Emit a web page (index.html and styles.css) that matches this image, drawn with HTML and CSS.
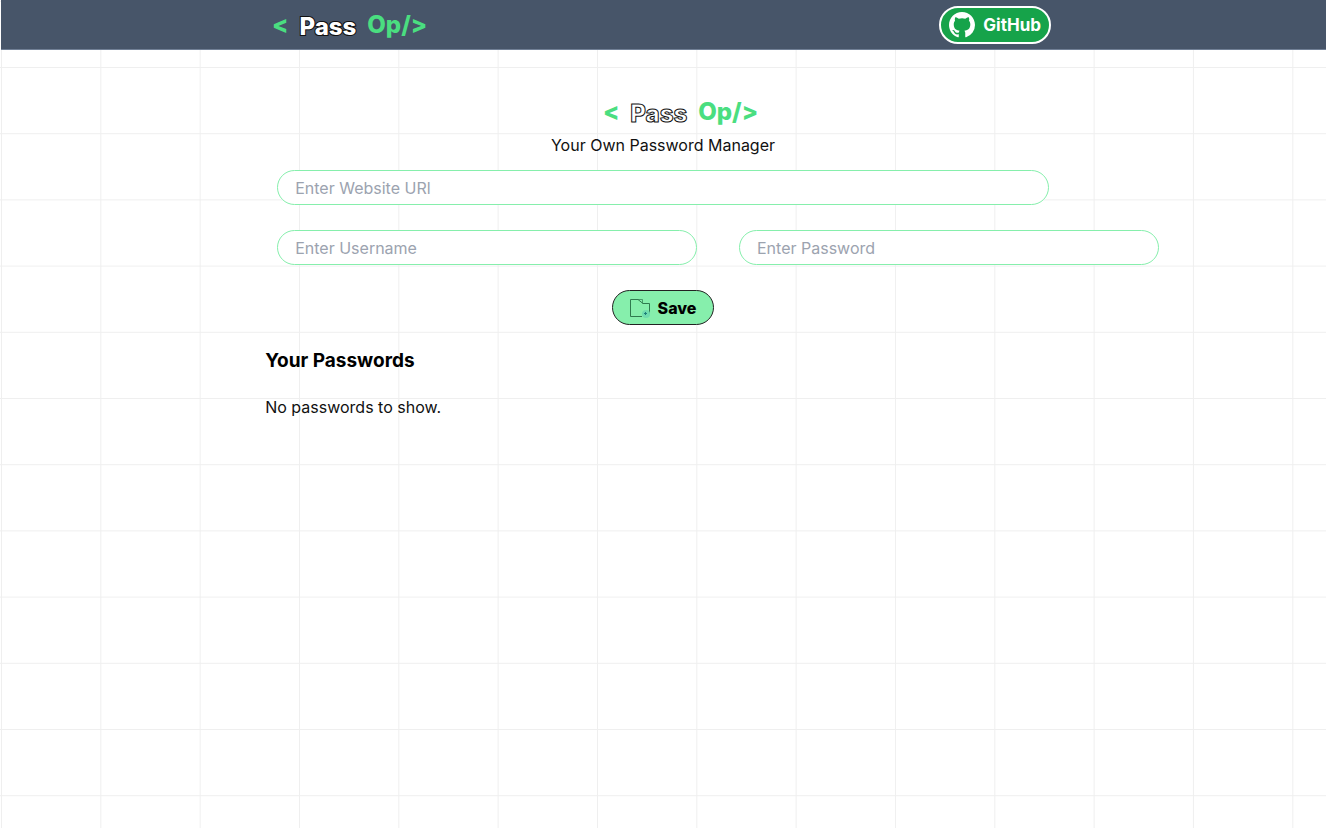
FILE: index.html
```html
<!DOCTYPE html>
<html lang="en">
<head>
<meta charset="utf-8">
<meta name="viewport" content="width=device-width, initial-scale=1">
<title>PassOp</title>
<link rel="stylesheet" href="styles.css">
</head>
<body>
<svg class="backdrop" aria-hidden="true">
  <defs>
    <pattern id="cells" x="1" y="67" width="99.33" height="66.2" patternUnits="userSpaceOnUse">
      <path d="M0 .5H99.33M.5 0V66.2" stroke="#efefef" fill="none"/>
    </pattern>
  </defs>
  <rect width="100%" height="100%" fill="url(#cells)"/>
</svg>
<header class="navbar">
  <div class="navbar-inner">
    <div class="logo"><span class="green">&lt;</span><span class="pass pass-solid">Pass</span><span class="green">Op/&gt;</span></div>
    <button class="github" type="button">
      <svg class="github-icon" viewBox="0 0 16 16" aria-hidden="true"><path fill="#fff" d="M8 0C3.58 0 0 3.58 0 8c0 3.54 2.29 6.53 5.47 7.59.4.07.55-.17.55-.38 0-.19-.01-.82-.01-1.49-2.01.37-2.53-.49-2.69-.94-.09-.23-.48-.94-.82-1.13-.28-.15-.68-.52-.01-.53.63-.01 1.08.58 1.23.82.72 1.21 1.87.87 2.33.66.07-.52.28-.87.51-1.07-1.78-.2-3.64-.89-3.64-3.95 0-.87.31-1.59.82-2.15-.08-.2-.36-1.02.08-2.12 0 0 .67-.21 2.2.82a7.4 7.4 0 0 1 4 0c1.53-1.04 2.2-.82 2.2-.82.44 1.1.16 1.92.08 2.12.51.56.82 1.27.82 2.15 0 3.07-1.87 3.75-3.65 3.95.29.25.54.73.54 1.48 0 1.07-.01 1.93-.01 2.2 0 .21.15.46.55.38A8.01 8.01 0 0 0 16 8c0-4.42-3.58-8-8-8z"/></svg>
      <span>GitHub</span>
    </button>
  </div>
</header>
<main class="content">
  <h1 class="logo logo-center"><span class="green">&lt;</span><span class="pass">Pass</span><span class="green">Op/&gt;</span></h1>
  <p class="tagline">Your Own Password Manager</p>
  <form class="form">
    <input class="field" type="text" aria-label="Website URL" placeholder="Enter Website URl">
    <div class="credentials">
      <input class="field" type="text" aria-label="Username" placeholder="Enter Username">
      <input class="field" type="password" aria-label="Password" placeholder="Enter Password">
    </div>
    <button class="save" type="button">
      <svg class="save-icon" viewBox="0 0 22 22" aria-hidden="true">
        <path d="M13 19.500H1.500V2.500H9L14 6.500H20.500V17" fill="none" stroke="#2f7a4e"/>
        <path d="M9 2.500L13.500 2.500V6.500" fill="none" stroke="#2f7a4e" stroke-width=".7"/>
        <circle cx="17" cy="17" r="4" fill="#6fdcae"/>
        <path d="M16.500 15V18M15 16.500H18" stroke="#1c7f78"/>
      </svg>
      <span>Save</span>
    </button>
  </form>
  <h2 class="heading">Your Passwords</h2>
  <p class="empty">No passwords to show.</p>
</main>
</body>
</html>
```
FILE: styles.css
```css
* {
  box-sizing: border-box;
}

body {
  position: relative;
  min-height: 100vh;
  margin: 0;
  background: #fff;
  color: #111;
  font: 16px/24px Inter, "Liberation Sans", sans-serif;
}

h1, h2, p {
  margin: 0;
}

.backdrop {
  position: absolute;
  inset: 0;
  z-index: -1;
  width: 100%;
  height: 100%;
  shape-rendering: crispEdges;
}

.navbar {
  margin-left: 1px;
  background: #475569;
  border-bottom: 1px solid #718096;
}

.navbar-inner {
  display: flex;
  align-items: center;
  justify-content: space-between;
  width: 60%;
  height: 49px;
  margin: 0 auto;
  padding: 0 10px 0 6px;
}

.logo {
  display: flex;
  align-items: center;
  gap: 11px;
  font-size: 24px;
  font-weight: 800;
  line-height: 32px;
}

.logo-center {
  justify-content: center;
  padding-left: 35px;
}

.green {
  color: #4ade80;
}

.pass {
  padding-top: 4px;
  color: #fff;
  -webkit-text-stroke: 1px #111;
}

.pass-solid {
  paint-order: stroke fill;
  -webkit-text-stroke: 2px #111;
}

.github {
  display: flex;
  align-items: center;
  gap: 8px;
  height: 38px;
  padding: 0 8px;
  border: 2px solid #fff;
  border-radius: 20px;
  background: #16a34a;
  color: #fff;
  font: 700 17px/24px Inter, sans-serif;
}

.github-icon {
  width: 26px;
  height: 26px;
}

.content {
  width: 60%;
  margin: 0 auto;
  padding-top: 44px;
}

.tagline {
  margin-top: 3px;
  text-align: center;
}

.form {
  display: flex;
  flex-direction: column;
  align-items: center;
  gap: 25px;
  padding: 13px 12px 0;
}

.field {
  width: 100%;
  height: 35px;
  padding: 0 17px;
  border: 1px solid #86efac;
  border-radius: 18px;
  background: #fff;
  color: #111;
  font: 16px/24px Inter, sans-serif;
}

.field::placeholder {
  color: #9ca3af;
}

.credentials {
  display: flex;
  gap: 42px;
  align-self: flex-start;
  width: calc(100% + 110px);
}

.save {
  display: flex;
  align-items: center;
  gap: 7px;
  height: 35px;
  padding: 0 17px 0 16px;
  border: 1px solid #222;
  border-radius: 18px;
  background: #86efac;
  color: #000;
  font: 800 16px/24px Inter, sans-serif;
}

.save-icon {
  width: 22px;
  height: 22px;
}

.heading {
  margin-top: 22px;
  color: #000;
  font-size: 19px;
  font-weight: 700;
  line-height: 28px;
}

.empty {
  margin-top: 20px;
}
```
